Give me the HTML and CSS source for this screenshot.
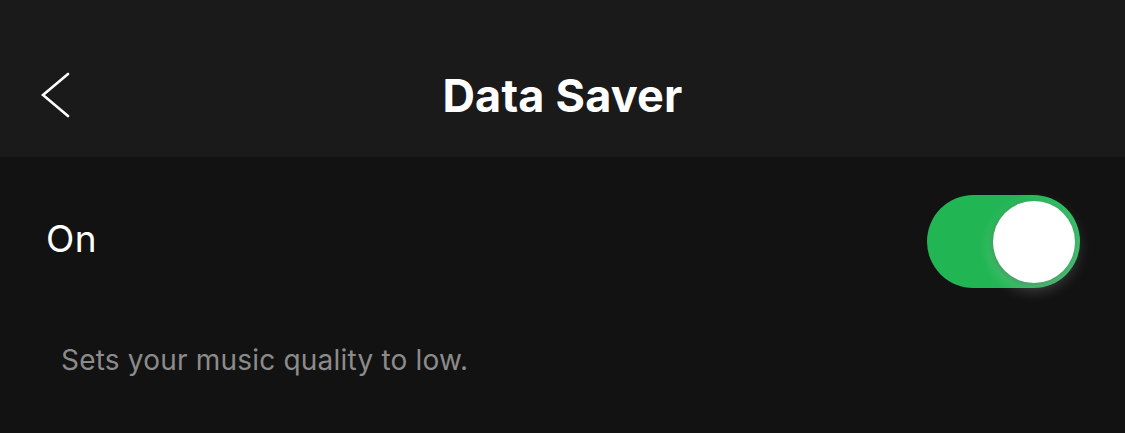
FILE: index.html
```html
<!DOCTYPE html>
<html>
<head>
    <title>Data Saver</title>
    <link rel="stylesheet" href="styles.css">
</head>
<body>
    <header class="topbar">
        <button class="back" aria-label="Back">
            <svg width="32" height="48" viewBox="0 0 32 48">
                <polyline points="27,4 2,25 27,46" fill="none" stroke="#fff" stroke-width="2.6" stroke-linecap="round" stroke-linejoin="miter"/>
            </svg>
        </button>
        <h1>Data Saver</h1>
    </header>

    <main class="settings">
        <div class="row">
            <span class="label">On</span>
            <div class="switch on">
                <div class="knob"></div>
            </div>
        </div>
        <p class="hint">Sets your music quality to low.</p>
    </main>
</body>
</html>
```

FILE: styles.css
```css
body {
    margin: 0;
    background: #121212;
    color: #fff;
    font-family: Inter, "Noto Sans", sans-serif;
    height: 433px;
    overflow: hidden;
}
.topbar {
    height: 157px;
    box-sizing: border-box;
    padding-top: 34px;
    background: #1a1a1a;
    display: flex;
    align-items: center;
    justify-content: center;
    position: relative;
}
.back {
    position: absolute;
    left: 41px;
    top: 70px;
    background: none;
    border: 0;
    padding: 0;
    line-height: 0;
}
.topbar h1 {
    margin: 0;
    font-size: 45px;
    font-weight: 700;
    letter-spacing: 0.2px;
}
.settings {
    padding: 38px 45px 0 46px;
}
.row {
    display: flex;
    align-items: center;
    justify-content: space-between;
}
.label {
    font-size: 37px;
    font-weight: 400;
    letter-spacing: 0.5px;
    margin-top: -6px;
}
.switch {
    width: 153px;
    height: 93px;
    border-radius: 47px;
    background: linear-gradient(90deg, #21b553 60%, #2fbf63);
    display: flex;
    align-items: center;
    justify-content: flex-end;
    padding-right: 5px;
    box-sizing: border-box;
}
.knob {
    width: 82px;
    height: 82px;
    border-radius: 50%;
    background: #fff;
    box-shadow: 0 5px 16px rgba(255,255,255,0.3), 0 2px 6px rgba(0,0,0,0.35);
}
.hint {
    margin: 55px 0 0 15px;
    font-size: 28px;
    letter-spacing: 0.2px;
    color: #8b8b8b;
}
```
